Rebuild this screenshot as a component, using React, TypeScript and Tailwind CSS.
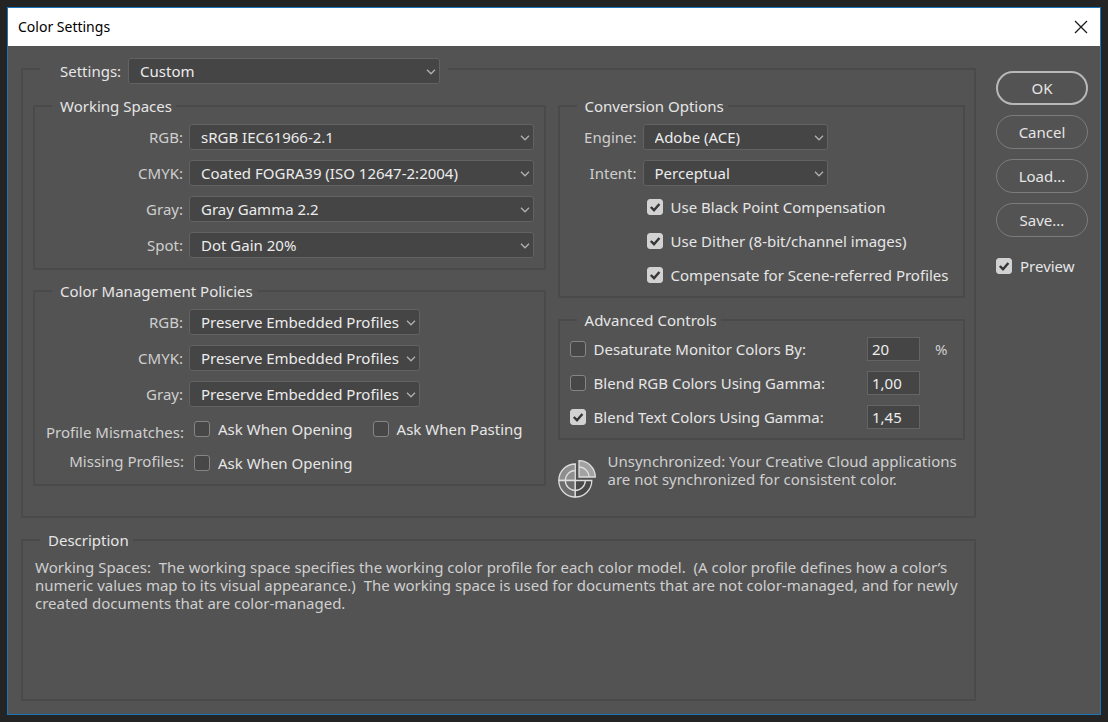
import type { ReactNode } from "react";
import { clsx } from "clsx";

const spaces = [
  { id: "ws-rgb", label: "RGB:", value: "sRGB IEC61966-2.1" },
  { id: "ws-cmyk", label: "CMYK:", value: "Coated FOGRA39 (ISO 12647-2:2004)" },
  { id: "ws-gray", label: "Gray:", value: "Gray Gamma 2.2" },
  { id: "ws-spot", label: "Spot:", value: "Dot Gain 20%" },
];

const policies = [
  { id: "cp-rgb", label: "RGB:" },
  { id: "cp-cmyk", label: "CMYK:" },
  { id: "cp-gray", label: "Gray:" },
];

const conversions = [
  { id: "engine", label: "Engine:", value: "Adobe (ACE)" },
  { id: "intent", label: "Intent:", value: "Perceptual" },
];

const advanced = [
  { id: "desaturate", label: "Desaturate Monitor Colors By:", value: "20", unit: "%", on: false },
  { id: "blend-rgb", label: "Blend RGB Colors Using Gamma:", value: "1,00", unit: "", on: false },
  { id: "blend-text", label: "Blend Text Colors Using Gamma:", value: "1,45", unit: "", on: true },
];

function Group({ title, className, children }: { title: string; className?: string; children: ReactNode }) {
  return (
    <fieldset className={clsx("min-w-0 border-2 border-[#4a4a4a]", className)}>
      <legend className="ml-[17px] pl-2 pr-1 leading-5 text-[#e6e6e6]">{title}</legend>
      {children}
    </fieldset>
  );
}

function Select({ id, value, className }: { id: string; value: string; className?: string }) {
  return (
    <div className={clsx("relative", className)}>
      <select
        id={id}
        defaultValue={value}
        className="block h-[26px] w-full appearance-none rounded-[3px] border border-[#626262] bg-[#454545] pl-[11px] pr-5 leading-5 text-[#ececec] outline-none"
      >
        <option>{value}</option>
      </select>
      <svg viewBox="0 0 10 6" className="pointer-events-none absolute right-1 top-[11px] h-[6px] w-[10px]">
        <path d="M1 0.8 L5 4.8 L9 0.8" fill="none" stroke="#b0b0b0" strokeWidth="1.3" />
      </svg>
    </div>
  );
}

function Check({ id, label, on = false }: { id: string; label: string; on?: boolean }) {
  return (
    <div className="flex h-5 items-center gap-2">
      <span className="relative size-4 shrink-0">
        <input
          id={id}
          type="checkbox"
          defaultChecked={on}
          className="peer block size-4 appearance-none rounded-[3px] border border-[#858585] bg-[#474747] checked:border-[#d2d2d2] checked:bg-[#d2d2d2]"
        />
        <svg
          viewBox="0 0 16 16"
          className="pointer-events-none absolute inset-0 hidden size-4 peer-checked:block"
        >
          <path d="M3.8 8 L7 11.2 L12.4 5" fill="none" stroke="#363636" strokeWidth="2.4" />
        </svg>
      </span>
      <label htmlFor={id} className="whitespace-nowrap text-[#e6e6e6]">
        {label}
      </label>
    </div>
  );
}

function SyncIcon() {
  return (
    <svg viewBox="0 0 38 38" className="mt-2 size-[38px] shrink-0" fill="none" stroke="#dcdcdc" strokeWidth="1.3">
      <path d="M17.3 20.5 H0.8 A16.5 16.5 0 0 1 17.3 4 Z" fill="#8e8e8e" />
      <path d="M17.3 20.5 V37 A16.5 16.5 0 0 1 0.8 20.5 Z" fill="#6c6c6c" />
      <path d="M17.3 20.5 H33.8 A16.5 16.5 0 0 1 17.3 37 Z" fill="#484848" />
      <path d="M17.3 10.5 A10 10 0 1 0 27.3 20.5" />
      <path d="M21 17 V0.7 A16.3 16.3 0 0 1 37.3 17 Z" fill="#a2a2a2" />
      <path d="M21 7 A10 10 0 0 1 31 17" />
    </svg>
  );
}

export default function App() {
  return (
    <div className="flex min-h-screen bg-[#242424] p-[7px] font-['Noto_Sans',sans-serif] text-[15px] leading-5 text-[#cfcfcf]">
      <div className="flex flex-1 flex-col border border-[#1b75bb] bg-[#535353]">
        <header className="flex h-[38px] items-center justify-between bg-white pl-[10px] pr-3">
          <h1 className="text-sm text-black">Color Settings</h1>
          <button aria-label="Close" className="size-[14px]">
            <svg viewBox="0 0 14 14" className="size-[14px]">
              <path d="M1 1 L13 13 M13 1 L1 13" stroke="#1c1c1c" strokeWidth="1.3" />
            </svg>
          </button>
        </header>

        <div className="flex flex-1 gap-5 pb-[13px] pl-[13px] pr-3">
          <main className="flex flex-1 flex-col pt-[7px]">
            <fieldset className="min-w-0 border-2 border-[#4a4a4a]">
              <legend className="ml-[17px] flex items-center gap-[7px] pl-5 pr-2 pt-[5px]">
                <label htmlFor="settings" className="text-[#e6e6e6]">
                  Settings:
                </label>
                <Select id="settings" value="Custom" className="w-[312px]" />
              </legend>

              <div className="grid grid-cols-[512fr_407fr] gap-3 pb-[18px] pl-[10px] pr-[9px] pt-3">
                <div className="flex flex-col gap-[11px]">
                  <Group title="Working Spaces" className="pb-[10px] pr-[10px]">
                    <div className="flex flex-col gap-[10px] pt-2">
                      {spaces.map((s) => (
                        <div key={s.id} className="flex items-center gap-[6px]">
                          <label htmlFor={s.id} className="w-[148px] text-right">
                            {s.label}
                          </label>
                          <Select id={s.id} value={s.value} className="flex-1" />
                        </div>
                      ))}
                    </div>
                  </Group>

                  <Group title="Color Management Policies" className="pb-[11px]">
                    <div className="flex flex-col gap-[10px] pt-2">
                      {policies.map((p) => (
                        <div key={p.id} className="flex items-center gap-[6px]">
                          <label htmlFor={p.id} className="w-[148px] text-right">
                            {p.label}
                          </label>
                          <Select id={p.id} value="Preserve Embedded Profiles" className="w-[231px]" />
                        </div>
                      ))}
                    </div>
                    <div className="flex gap-[10px] pt-3">
                      <div className="flex w-[149px] flex-col gap-[9px] pt-[3px] text-right">
                        <span>Profile Mismatches:</span>
                        <span>Missing Profiles:</span>
                      </div>
                      <div className="flex flex-col gap-[14px]">
                        <div className="flex gap-5">
                          <Check id="mismatch-open" label="Ask When Opening" />
                          <Check id="mismatch-paste" label="Ask When Pasting" />
                        </div>
                        <Check id="missing-open" label="Ask When Opening" />
                      </div>
                    </div>
                  </Group>
                </div>

                <div className="flex flex-col gap-3">
                  <Group title="Conversion Options" className="pb-[11px]">
                    <div className="flex flex-col gap-[10px] pt-2">
                      {conversions.map((c) => (
                        <div key={c.id} className="flex items-center gap-[6px]">
                          <label htmlFor={c.id} className="w-[77px] text-right">
                            {c.label}
                          </label>
                          <Select id={c.id} value={c.value} className="w-[185px]" />
                        </div>
                      ))}
                    </div>
                    <div className="flex flex-col gap-[14px] pl-[87px] pt-[11px]">
                      <Check id="bpc" label="Use Black Point Compensation" on />
                      <Check id="dither" label="Use Dither (8-bit/channel images)" on />
                      <Check id="scene" label="Compensate for Scene-referred Profiles" on />
                    </div>
                  </Group>

                  <Group title="Advanced Controls" className="pb-[9px]">
                    <div className="flex flex-col gap-[10px] pl-[10px] pt-[7px]">
                      {advanced.map((a) => (
                        <div key={a.id} className="flex items-center">
                          <Check id={a.id} label={a.label} on={a.on} />
                          <input
                            type="text"
                            aria-label={a.label}
                            defaultValue={a.value}
                            className="ml-auto h-6 w-[53px] border border-[#646464] bg-[#454545] pl-1 text-[#ececec] outline-none"
                          />
                          <span className="w-[43px] pl-[15px]">{a.unit}</span>
                        </div>
                      ))}
                    </div>
                  </Group>

                  <div className="flex gap-3">
                    <SyncIcon />
                    <p className="whitespace-nowrap leading-[18px]">
                      Unsynchronized: Your Creative Cloud applications
                      <br />
                      are not synchronized for consistent color.
                    </p>
                  </div>
                </div>
              </div>
            </fieldset>

            <Group title="Description" className="mt-3 flex-1">
              <p className="px-3 pt-2 leading-[18px]">
                Working Spaces:&nbsp; The working space specifies the working color profile for each color model.&nbsp;
                (A color profile defines how a color’s numeric values map to its visual appearance.)&nbsp; The working
                space is used for documents that are not color-managed, and for newly created documents that are
                color-managed.
              </p>
            </Group>
          </main>

          <aside className="flex w-[92px] flex-col gap-[10px] pt-[25px] text-[#e6e6e6]">
            <button className="h-[34px] rounded-full border-2 border-[#b8b8b8]">OK</button>
            <button className="h-[34px] rounded-full border border-[#7c7c7c]">Cancel</button>
            <button className="h-[34px] rounded-full border border-[#7c7c7c]">Load...</button>
            <button className="h-[34px] rounded-full border border-[#7c7c7c]">Save...</button>
            <div className="pt-[9px]">
              <Check id="preview" label="Preview" on />
            </div>
          </aside>
        </div>
      </div>
    </div>
  );
}
